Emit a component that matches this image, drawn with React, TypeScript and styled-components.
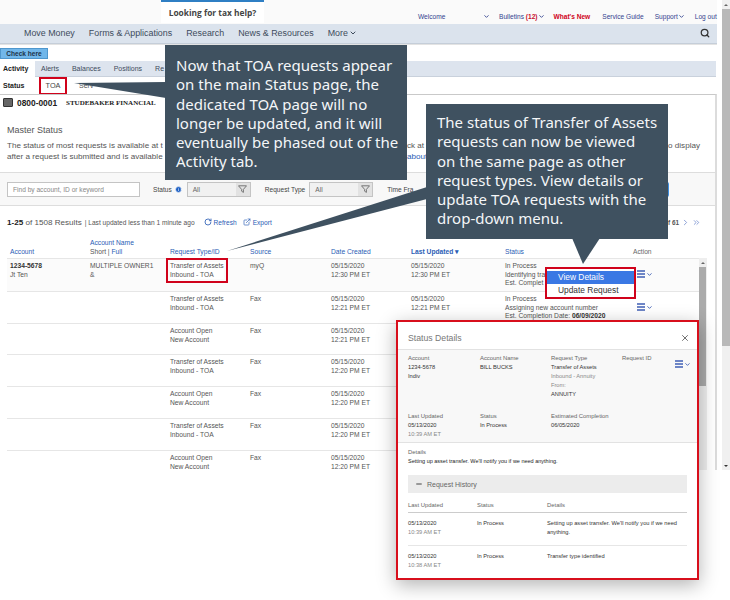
import React from 'react';
import styled, { createGlobalStyle } from 'styled-components';
import { Search, X, RotateCw, ExternalLink, ChevronDown, ChevronRight, ChevronsRight, Info, Minus } from 'lucide-react';

const GlobalStyle = createGlobalStyle`
  html, body { margin: 0; padding: 0; background: #fff; }
  body { font-family: "Liberation Sans", Arial, sans-serif; color: #444; }
  * { box-sizing: border-box; }
`;

const rows = [
  { type: 'Transfer of Assets', sub: 'Inbound - TOA', source: 'myQ', created: '12:30 PM ET', updated: '12:30 PM ET', first: true, height: 33 },
  { type: 'Transfer of Assets', sub: 'Inbound - TOA', source: 'Fax', created: '12:21 PM ET', updated: '12:21 PM ET', height: 32 },
  { type: 'Account Open', sub: 'New Account', source: 'Fax', created: '12:21 PM ET', height: 31 },
  { type: 'Transfer of Assets', sub: 'Inbound - TOA', source: 'Fax', created: '12:20 PM ET', height: 32 },
  { type: 'Account Open', sub: 'New Account', source: 'Fax', created: '12:20 PM ET', height: 32 },
  { type: 'Transfer of Assets', sub: 'Inbound - TOA', source: 'Fax', created: '12:20 PM ET', height: 32 },
  { type: 'Account Open', sub: 'New Account', source: 'Fax', created: '12:20 PM ET', height: 32 },
];

const MenuGlyph = () => (
  <MenuIcon>
    <svg width="8" height="8" viewBox="0 0 8 8"><path d="M0 1h8M0 4h8M0 7h8" stroke="#3f5fb5" strokeWidth="1.3" /></svg>
    <ChevronDown size={7} strokeWidth={3} color="#3f5fb5" />
  </MenuIcon>
);

const FunnelGlyph = () => (
  <svg width="9" height="8" viewBox="0 0 9 8"><path d="M.5.8h8L5.4 4.4v3L3.6 6.2V4.4z" fill="none" stroke="#777" strokeWidth="1" /></svg>
);

const App: React.FC = () => {
  return (
    <Page>
      <GlobalStyle />
      <Main>
        <TopBar>
          <TaxTab>Looking for tax help?</TaxTab>
          <TopLinks>
            <TopLink $w={65}>Welcome</TopLink>
            <ChevronDown size={7} strokeWidth={3} color="#33438f" />
            <TopLink $ml={9}>Bulletins <b style={{ color: '#c8102e' }}>(12)</b></TopLink>
            <ChevronDown size={7} strokeWidth={3} color="#33438f" />
            <TopLink $ml={9}>
              <RedLink>What's New</RedLink>
            </TopLink>
            <TopLink $ml={12}>Service Guide</TopLink>
            <TopLink $ml={11}>Support</TopLink>
            <ChevronDown size={7} strokeWidth={3} color="#33438f" />
            <TopLink $ml={10}>Log out</TopLink>
          </TopLinks>
        </TopBar>

        <NavBar>
          <NavItem>Move Money</NavItem>
          <NavItem>Forms &amp; Applications</NavItem>
          <NavItem>Research</NavItem>
          <NavItem>News &amp; Resources</NavItem>
          <NavItem>More<ChevronDown size={8} strokeWidth={3} /></NavItem>
          <NavSearch><Search size={10} strokeWidth={3} color="#333" /></NavSearch>
        </NavBar>

        <CheckRow><CheckButton>Check here</CheckButton></CheckRow>

        <TabsBar>
          <Tab $active>Activity</Tab>
          <Tab>Alerts</Tab>
          <Tab>Balances</Tab>
          <Tab>Positions</Tab>
          <Tab>Re</Tab>
        </TabsBar>

        <SubTabs>
          <SubTab $bold>Status</SubTab>
          <TocTab>TOA</TocTab>
          <SubTab>Serv</SubTab>
        </SubTabs>

        <Panel>
          <AccountRow>
            <AccountIcon />
            <AccountNo>0800-0001</AccountNo>
            <FirmName>STUDEBAKER FINANCIAL</FirmName>
          </AccountRow>

          <MasterBlock>
            <MasterTitle>Master Status</MasterTitle>
            <MasterLine>
              <MasterPiece $w={400}>The status of most requests is available at t</MasterPiece>
              <MasterPiece>ck at</MasterPiece>
              <MasterPiece $end>o display</MasterPiece>
            </MasterLine>
            <MasterLine>
              <MasterPiece $w={400}>after a request is submitted and is available</MasterPiece>
              <MasterPiece $link>about</MasterPiece>
            </MasterLine>
          </MasterBlock>

          <FilterBar>
            <FindInput>Find by account, ID or keyword</FindInput>
            <FilterLabel $ml={13}>Status</FilterLabel>
            <Info size={7} color="#fff" fill="#1c5fc4" style={{ marginLeft: 3 }} />
            <SelectBox $ml={5}>All<FunnelWrap><FunnelGlyph /></FunnelWrap></SelectBox>
            <FilterLabel $ml={14}>Request Type</FilterLabel>
            <SelectBox $ml={4}>All<FunnelWrap><FunnelGlyph /></FunnelWrap></SelectBox>
            <FilterLabel $ml={14}>Time Fra</FilterLabel>
            <ApplyButton />
          </FilterBar>

          <ResultsRow>
            <ResultCount><b>1-25</b> of 1508 Results</ResultCount>
            <ResultNote>| Last updated less than 1 minute ago</ResultNote>
            <ResultAction $ml={9}><RotateCw size={8} strokeWidth={2.5} />Refresh</ResultAction>
            <ResultAction $ml={6}><ExternalLink size={8} />Export</ResultAction>
            <Pager>
              of 61
              <ChevronRight size={9} color="#6b86c9" />
              <ChevronsRight size={9} color="#6b86c9" />
            </Pager>
          </ResultsRow>

          <HeaderRow>
            <HeadCell>Account</HeadCell>
            <HeadCell>Account Name<br /><HeadMuted>Short | </HeadMuted>Full</HeadCell>
            <HeadCell>Request Type/ID</HeadCell>
            <HeadCell>Source</HeadCell>
            <HeadCell>Date Created</HeadCell>
            <HeadCell><b>Last Updated ▾</b></HeadCell>
            <HeadCell>Status</HeadCell>
            <HeadCell $gray>Action</HeadCell>
          </HeaderRow>

          <TableWrap>
            <Rows>
              {rows.map((r, i) => (
                <Row key={i} $h={r.height} $tint={r.first}>
                  <Cell>{r.first && <><b>1234-5678</b><br />Jt Ten</>}</Cell>
                  <Cell>{r.first && <>MULTIPLE OWNER1<br />&amp;</>}</Cell>
                  <Cell>{r.first ? <Flagged>{r.type}<br />{r.sub}</Flagged> : <>{r.type}<br />{r.sub}</>}</Cell>
                  <Cell>{r.source}</Cell>
                  <Cell>05/15/2020<br />{r.created}</Cell>
                  <Cell>{r.updated && <>05/15/2020<br />{r.updated}</>}</Cell>
                  <Cell>
                    {i === 0 && <>In Process<br />Identifying tra<br />Est. Complet</>}
                    {i === 1 && <>In Process<br />Assigning new account number<br />Est. Completion Date: <b>06/09/2020</b></>}
                  </Cell>
                  <ActionCell>{i < 2 && <MenuGlyph />}</ActionCell>
                </Row>
              ))}
            </Rows>
            <InnerScroll>
              <ArrowCap><ArrowUp /></ArrowCap>
              <InnerThumb />
            </InnerScroll>
          </TableWrap>
        </Panel>
      </Main>

      <OuterScroll>
        <ArrowCap><ArrowUp /></ArrowCap>
        <OuterThumb />
        <ArrowCap $bottom><ArrowDown /></ArrowCap>
      </OuterScroll>

      {/* callouts */}
      <Pointers width="730" height="600" viewBox="0 0 730 600">
        <polygon points="74,83 166,82 166,98" fill="#3f5160" />
        <polygon points="227,251 427,187 427,199" fill="#3f5160" />
        <polygon points="572,238 600,238 583,264" fill="#3f5160" />
      </Pointers>
      <Callout $left={165} $top={45} $pad={11}>
        Now that TOA requests appear<br />
        on the main Status page, the<br />
        dedicated TOA page will no<br />
        longer be updated, and it will<br />
        eventually be phased out of the<br />
        Activity tab.
      </Callout>
      <Callout $left={426} $top={104} $pad={9}>
        The status of Transfer of Assets<br />
        requests can now be viewed<br />
        on the same page as other<br />
        request types. View details or<br />
        update TOA requests with the<br />
        drop-down menu.
      </Callout>

      <Dropdown>
        <DropItem $active>View Details</DropItem>
        <DropItem>Update Request</DropItem>
      </Dropdown>

      <Modal>
        <ModalHead>
          <ModalTitle>Status Details</ModalTitle>
          <X size={10} color="#555" />
        </ModalHead>
        <ModalSummary>
          <SummaryGrid>
            <div>
              <Label>Account</Label>
              <Value>1234-5678</Value>
              <Value>Indiv</Value>
            </div>
            <div>
              <Label>Account Name</Label>
              <Value>BILL BUCKS</Value>
            </div>
            <div>
              <Label>Request Type</Label>
              <Value>Transfer of Assets</Value>
              <Muted>Inbound - Annuity</Muted>
              <Muted>From:</Muted>
              <Value>ANNUITY</Value>
            </div>
            <div>
              <Label>Request ID</Label>
            </div>
            <MenuSlot><MenuGlyph /></MenuSlot>
            <div>
              <Label>Last Updated</Label>
              <Value>05/13/2020</Value>
              <Muted>10:39 AM ET</Muted>
            </div>
            <div>
              <Label>Status</Label>
              <Value>In Process</Value>
            </div>
            <div>
              <Label>Estimated Completion</Label>
              <Value>06/05/2020</Value>
            </div>
          </SummaryGrid>
        </ModalSummary>
        <ModalBody>
          <Label>Details</Label>
          <DetailText>Setting up asset transfer. We'll notify you if we need anything.</DetailText>
          <HistoryBar><Minus size={8} strokeWidth={3} color="#444" />Request History</HistoryBar>
          <HistoryHead>
            <Label>Last Updated</Label>
            <Label>Status</Label>
            <Label>Details</Label>
          </HistoryHead>
          <HistoryRow>
            <div><Value>05/13/2020</Value><Muted>10:39 AM ET</Muted></div>
            <Value>In Process</Value>
            <Value>Setting up asset transfer. We'll notify you if we need<br />anything.</Value>
          </HistoryRow>
          <HistoryRow $last>
            <div><Value>05/13/2020</Value><Muted>10:38 AM ET</Muted></div>
            <Value>In Process</Value>
            <Value>Transfer type identified</Value>
          </HistoryRow>
        </ModalBody>
      </Modal>
    </Page>
  );
};

export default App;

const Page = styled.div`
  position: relative;
  display: flex;
  align-items: flex-start;
  width: 730px;
  height: 600px;
  overflow: hidden;
  background: #fff;
`;

const Main = styled.div`
  width: 717px;
  margin-right: 5px;
  display: flex;
  flex-direction: column;
`;

const OuterScroll = styled.div`
  width: 8px;
  height: 470px;
  background: #f0f0f0;
  display: flex;
  flex-direction: column;
`;

const OuterThumb = styled.div`
  height: 337px;
  background: #b9b9b9;
`;

const ArrowCap = styled.div<{ $bottom?: boolean }>`
  height: 9px;
  flex-shrink: 0;
  margin-top: ${(p) => (p.$bottom ? 'auto' : 0)};
  display: flex;
  align-items: center;
  justify-content: center;
`;

const ArrowUp = styled.span`
  border-left: 2px solid transparent;
  border-right: 2px solid transparent;
  border-bottom: 2px solid #666;
`;

const ArrowDown = styled.span`
  border-left: 2px solid transparent;
  border-right: 2px solid transparent;
  border-top: 2px solid #333;
`;

const TopBar = styled.div`
  height: 24px;
  background: #fafafa;
  display: flex;
  padding-left: 161px;
`;

const TaxTab = styled.div`
  width: 103px;
  height: 23px;
  flex-shrink: 0;
  background: #fff;
  border-top: 2px solid #2f7fc4;
  font-size: 8.4px;
  font-weight: bold;
  font-family: "Open Sans", sans-serif;
  color: #444;
  display: flex;
  align-items: center;
  justify-content: center;
`;

const TopLinks = styled.div`
  margin-left: 154px;
  display: flex;
  align-items: center;
  height: 32px;
`;

const TopLink = styled.span<{ $ml?: number; $w?: number }>`
  font-size: 6.6px;
  margin-left: ${(p) => p.$ml ?? 0}px;
  width: ${(p) => (p.$w ? `${p.$w}px` : 'auto')};
  color: #33438f;
  white-space: nowrap;
`;

const RedLink = styled.span`
  color: #d0021b;
  font-weight: bold;
`;

const NavBar = styled.div`
  height: 20px;
  background: #dbe3ed;
  border-bottom: 1px solid #c5ced9;
  padding-left: 24px;
  padding-bottom: 1px;
  display: flex;
  align-items: center;
  gap: 14px;
`;

const NavItem = styled.span`
  display: inline-flex;
  align-items: center;
  gap: 1px;
  font-size: 8.9px;
  color: #3d4b5c;
  white-space: nowrap;
`;

const NavSearch = styled.span`
  margin-left: auto;
  margin-right: 7px;
  display: flex;
`;

const CheckRow = styled.div`
  height: 17px;
  padding-top: 3px;
  border-top: 1px solid #e3e3e3;
`;

const CheckButton = styled.div`
  width: 48px;
  height: 11px;
  background: #71b7ea;
  border: 1px solid #4f97cd;
  font-size: 6.6px;
  font-weight: bold;
  color: #20344a;
  text-align: center;
  line-height: 9px;
`;

const TabsBar = styled.div`
  height: 16px;
  background: #dde4ee;
  border-bottom: 1px solid #c9d1dc;
  display: flex;
  width: 716px;
  gap: 1px;
`;

const Tab = styled.div<{ $active?: boolean }>`
  padding: 0 ${(p) => (p.$active ? 3 : 6)}px;
  margin-right: ${(p) => (p.$active ? -1 : 0)}px;
  background: ${(p) => (p.$active ? '#fff' : 'transparent')};
  font-size: 7px;
  line-height: 16px;
  height: ${(p) => (p.$active ? 17 : 16)}px;
  font-weight: ${(p) => (p.$active ? 'bold' : 'normal')};
  color: ${(p) => (p.$active ? '#222' : '#3d4b5c')};
  width: ${(p) => (p.$active ? '35px' : 'auto')};
`;

const SubTabs = styled.div`
  height: 17px;
  display: flex;
  align-items: center;
  padding-left: 3px;
`;

const SubTab = styled.span<{ $bold?: boolean }>`
  font-size: 7px;
  font-weight: ${(p) => (p.$bold ? 'bold' : 'normal')};
  color: ${(p) => (p.$bold ? '#222' : '#555')};
  width: ${(p) => (p.$bold ? 36 : 30)}px;
  margin-left: ${(p) => (p.$bold ? 0 : 12)}px;
`;

const TocTab = styled.span`
  width: 28px;
  height: 18px;
  border: 2px solid #d0021b;
  font-size: 7.3px;
  color: #444;
  display: flex;
  align-items: center;
  justify-content: center;
`;

const Panel = styled.div`
  width: 717px;
  height: 376px;
  border-top: 1px solid #c9c9c9;
  border-right: 2px solid #dcdcdc;
  display: flex;
  flex-direction: column;
`;

const AccountRow = styled.div`
  height: 15px;
  display: flex;
  align-items: center;
  padding-left: 3px;
`;

const AccountIcon = styled.span`
  width: 10px;
  height: 9px;
  background: #666;
  border: 1px solid #333;
  border-radius: 1px;
`;

const AccountNo = styled.span`
  margin-left: 4px;
  font-size: 8.4px;
  font-weight: bold;
  color: #222;
`;

const FirmName = styled.span`
  margin-left: 9px;
  font-family: "Liberation Serif", serif;
  font-size: 7px;
  font-weight: bold;
  color: #222;
`;

const MasterBlock = styled.div`
  height: 63px;
  padding: 15px 15px 0 7px;
  border-bottom: 1px solid #ddd;
`;

const MasterTitle = styled.div`
  font-size: 9px;
  color: #555;
  margin-bottom: 5px;
`;

const MasterLine = styled.div`
  display: flex;
  height: 11px;
  line-height: 11px;
`;

const MasterPiece = styled.span<{ $w?: number; $end?: boolean; $link?: boolean }>`
  font-size: 8.1px;
  color: ${(p) => (p.$link ? '#2a5db5' : '#555')};
  white-space: nowrap;
  width: ${(p) => (p.$w ? `${p.$w}px` : 'auto')};
  margin-left: ${(p) => (p.$end ? 'auto' : 0)};
`;

const FilterBar = styled.div`
  height: 33px;
  width: 715px;
  background: #f8f8f8;
  border-bottom: 1px solid #ddd;
  display: flex;
  align-items: center;
  padding-left: 7px;
`;

const FindInput = styled.div`
  width: 133px;
  height: 15px;
  background: #fff;
  border: 1px solid #c4c4c4;
  font-size: 6.6px;
  line-height: 13px;
  color: #888;
  padding-left: 5px;
`;

const FilterLabel = styled.span<{ $ml: number }>`
  margin-left: ${(p) => p.$ml}px;
  font-size: 6.6px;
  color: #444;
  white-space: nowrap;
`;

const SelectBox = styled.div<{ $ml: number }>`
  width: 64px;
  height: 15px;
  margin-left: ${(p) => p.$ml}px;
  background: #f1f1f1;
  border: 1px solid #c4c4c4;
  font-size: 6.6px;
  line-height: 13px;
  color: #666;
  padding-left: 5px;
  display: flex;
  justify-content: space-between;
`;

const FunnelWrap = styled.span`
  width: 14px;
  background: #e2e2e2;
  display: flex;
  align-items: center;
  justify-content: center;
`;

const ApplyButton = styled.div`
  margin-left: auto;
  margin-right: 46px;
  width: 30px;
  height: 15px;
  background: #3f8fe0;
  border-radius: 2px;
`;

const ResultsRow = styled.div`
  height: 32px;
  display: flex;
  align-items: center;
  padding: 0 8px 0 7px;
`;

const ResultCount = styled.span`
  font-size: 8.1px;
  color: #555;
  white-space: nowrap;

  b { color: #222; }
`;

const ResultNote = styled.span`
  margin-left: 3px;
  font-size: 6.6px;
  color: #555;
  white-space: nowrap;
`;

const ResultAction = styled.span<{ $ml: number }>`
  margin-left: ${(p) => p.$ml}px;
  display: inline-flex;
  align-items: center;
  gap: 2px;
  font-size: 6.6px;
  color: #2a5db5;
  white-space: nowrap;
`;

const Pager = styled.span`
  margin-left: auto;
  margin-right: 6px;
  display: inline-flex;
  align-items: center;
  gap: 2px;
  font-size: 6.4px;
  font-weight: bold;
  color: #555;
`;

const columns = '80px 80px 80px 81px 80px 94px 128px 1fr';

const HeaderRow = styled.div`
  height: 15px;
  display: grid;
  grid-template-columns: ${columns};
  padding-left: 10px;
  padding-right: 16px;
  align-items: end;
`;

const HeadCell = styled.div<{ $gray?: boolean }>`
  font-size: 6.7px;
  line-height: 9px;
  padding-bottom: 1px;
  color: ${(p) => (p.$gray ? '#666' : '#2a5db5')};
`;

const HeadMuted = styled.span`
  color: #555;
`;

const TableWrap = styled.div`
  display: flex;
  margin-top: 5px;
  height: 212px;
`;

const Rows = styled.div`
  flex: 1;
`;

const Row = styled.div<{ $h: number; $tint?: boolean }>`
  height: ${(p) => p.$h}px;
  margin-left: 7px;
  display: grid;
  grid-template-columns: ${columns};
  padding: 3px 0 0 3px;
  border-top: 1px solid #e6e6e6;
  background: ${(p) => (p.$tint ? '#fbfbfb' : '#fff')};
`;

const Cell = styled.div`
  font-size: 6.7px;
  line-height: 8.6px;
  color: #555;
  white-space: nowrap;

  b { color: #333; }
`;

const ActionCell = styled.div`
  padding: 2px 0 0 4px;
`;

const Flagged = styled.span`
  display: inline-block;
  outline: 2px solid #d0021b;
  outline-offset: 2px;
  background: #fff;
`;

const MenuIcon = styled.span`
  display: inline-flex;
  align-items: center;
  gap: 1px;
`;

const InnerScroll = styled.div`
  width: 8px;
  margin-right: 8px;
  background: #eeeeee;
  flex-shrink: 0;
`;

const InnerThumb = styled.div`
  height: 119px;
  width: 7px;
  background: #ababab;
`;

const Pointers = styled.svg`
  position: absolute;
  left: 0;
  top: 0;
  pointer-events: none;
`;

const Callout = styled.div<{ $left: number; $top: number; $pad: number }>`
  position: absolute;
  left: ${(p) => p.$left}px;
  top: ${(p) => p.$top}px;
  width: 242px;
  height: 135px;
  background: #3f5160;
  color: #f4f6f8;
  padding: ${(p) => p.$pad}px 0 0 11px;
  font-family: "Noto Sans", sans-serif;
  font-size: 15px;
  line-height: 19.3px;
  white-space: nowrap;
`;

const Dropdown = styled.div`
  position: absolute;
  left: 545px;
  top: 267px;
  width: 91px;
  height: 32px;
  background: #fff;
  border: 2px solid #d0021b;
  padding-top: 2px;
`;

const DropItem = styled.div<{ $active?: boolean }>`
  height: 13px;
  padding-left: 11px;
  font-size: 8.4px;
  line-height: 13px;
  color: ${(p) => (p.$active ? '#fff' : '#333')};
  background: ${(p) => (p.$active ? '#3a78e4' : '#fff')};
`;

const Modal = styled.div`
  position: absolute;
  left: 396px;
  top: 320px;
  width: 303px;
  height: 260px;
  background: #fff;
  border: 2px solid #d80f1c;
  box-shadow: 0 5px 18px rgba(0, 0, 0, 0.3);
  display: flex;
  flex-direction: column;
`;

const ModalHead = styled.div`
  height: 28px;
  flex-shrink: 0;
  border-bottom: 1px solid #e2e2e2;
  display: flex;
  align-items: center;
  justify-content: space-between;
  padding: 4px 7px 0 10px;
`;

const ModalTitle = styled.div`
  font-size: 8.7px;
  color: #777;
`;

const ModalSummary = styled.div`
  height: 93px;
  flex-shrink: 0;
  background: #f8f8f8;
  border-bottom: 1px solid #e2e2e2;
  padding: 4px 10px 0;
`;

const SummaryGrid = styled.div`
  display: grid;
  grid-template-columns: 72px 71px 71px 53px 1fr;
  grid-template-rows: 58px 1fr;
`;

const MenuSlot = styled.div`
  text-align: right;
`;

const Label = styled.div`
  font-size: 5.9px;
  line-height: 9px;
  color: #666;
`;

const Value = styled.div`
  font-size: 5.7px;
  line-height: 9px;
  color: #333;
`;

const Muted = styled.div`
  font-size: 5.7px;
  line-height: 9px;
  color: #888;
`;

const ModalBody = styled.div`
  flex: 1;
  padding: 5px 10px 0;
`;

const DetailText = styled.div`
  font-size: 5.5px;
  line-height: 8px;
  color: #222;
`;

const HistoryBar = styled.div`
  height: 18px;
  margin-top: 10px;
  background: #ececec;
  display: flex;
  align-items: center;
  gap: 4px;
  padding-left: 7px;
  font-size: 7px;
  color: #666;
`;

const historyColumns = '69px 70px 1fr';

const HistoryHead = styled.div`
  display: grid;
  grid-template-columns: ${historyColumns};
  margin-top: 8px;
  padding-bottom: 2px;
  border-bottom: 1px solid #ccc;
`;

const HistoryRow = styled.div<{ $last?: boolean }>`
  display: grid;
  grid-template-columns: ${historyColumns};
  height: 33px;
  padding-top: 6px;
  border-bottom: ${(p) => (p.$last ? 'none' : '1px solid #e6e6e6')};
`;
